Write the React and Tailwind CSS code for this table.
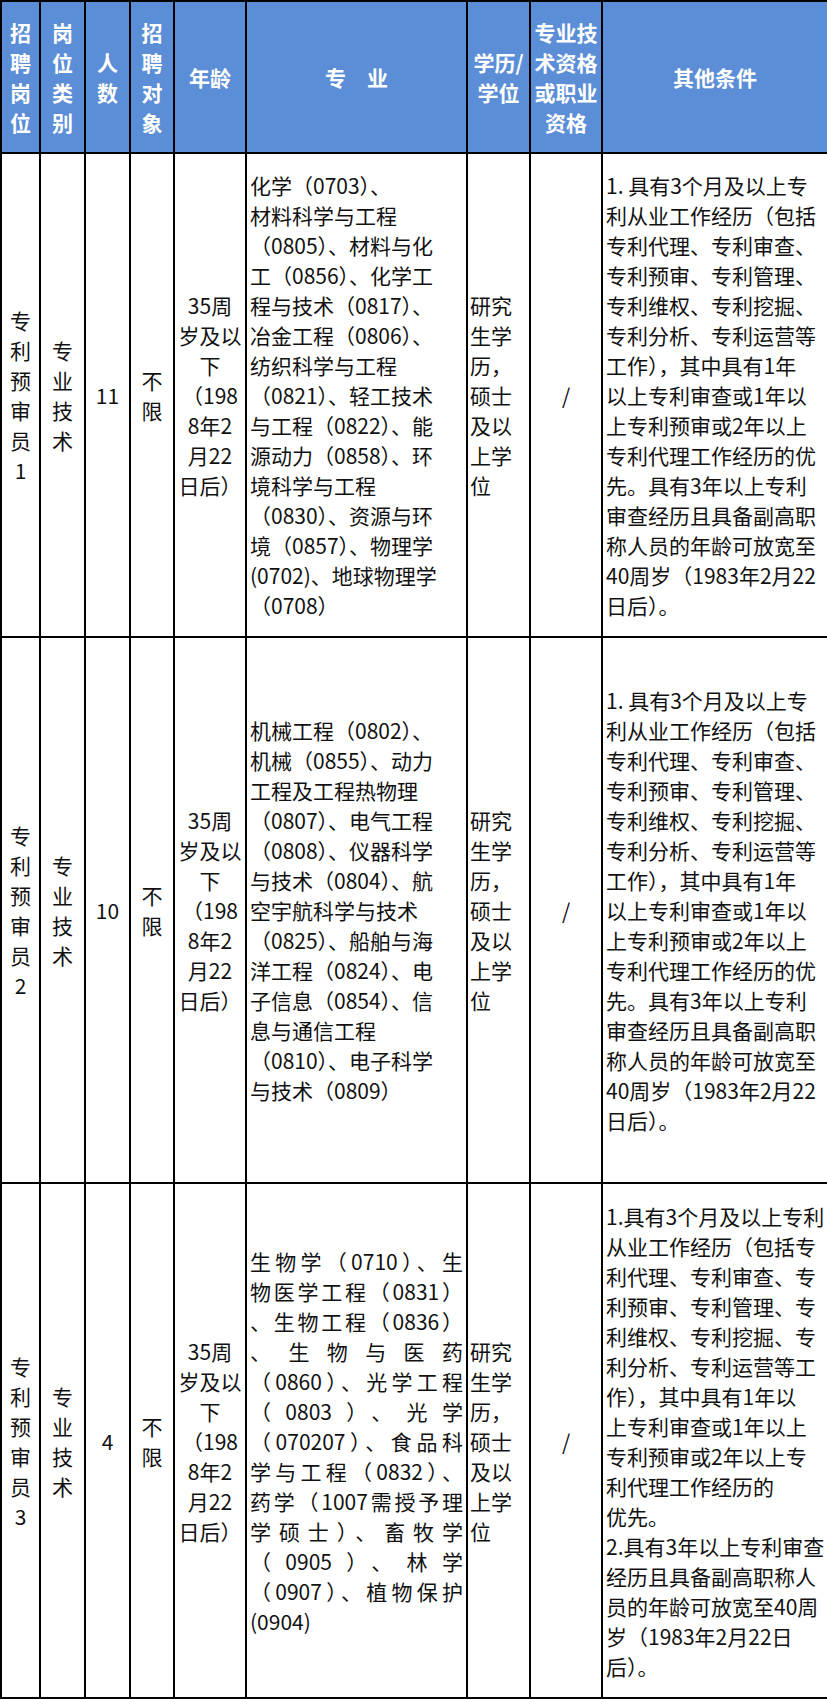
import React from 'react';

const rows = [
    {
        count: '11',
        h: 'h-[484px]',
        justify: false,
        majors: [
            '化学（0703）、',
            '材料科学与工程',
            '（0805）、材料与化',
            '工（0856）、化学工',
            '程与技术（0817）、',
            '冶金工程（0806）、',
            '纺织科学与工程',
            '（0821）、轻工技术',
            '与工程（0822）、能',
            '源动力（0858）、环',
            '境科学与工程',
            '（0830）、资源与环',
            '境（0857）、物理学',
            '(0702)、地球物理学',
            '（0708）',
        ],
        other: [
            '1. 具有3个月及以上专',
            '利从业工作经历（包括',
            '专利代理、专利审查、',
            '专利预审、专利管理、',
            '专利维权、专利挖掘、',
            '专利分析、专利运营等',
            '工作），其中具有1年',
            '以上专利审查或1年以',
            '上专利预审或2年以上',
            '专利代理工作经历的优',
            '先。具有3年以上专利',
            '审查经历且具备副高职',
            '称人员的年龄可放宽至',
            '40周岁（1983年2月22',
            '日后）。',
        ],
        pos: ['专', '利', '预', '审', '员', '1'],
    },
    {
        count: '10',
        h: 'h-[546px]',
        justify: false,
        majors: [
            '机械工程（0802）、',
            '机械（0855）、动力',
            '工程及工程热物理',
            '（0807）、电气工程',
            '（0808）、仪器科学',
            '与技术（0804）、航',
            '空宇航科学与技术',
            '（0825）、船舶与海',
            '洋工程（0824）、电',
            '子信息（0854）、信',
            '息与通信工程',
            '（0810）、电子科学',
            '与技术（0809）',
        ],
        other: [
            '1. 具有3个月及以上专',
            '利从业工作经历（包括',
            '专利代理、专利审查、',
            '专利预审、专利管理、',
            '专利维权、专利挖掘、',
            '专利分析、专利运营等',
            '工作），其中具有1年',
            '以上专利审查或1年以',
            '上专利预审或2年以上',
            '专利代理工作经历的优',
            '先。具有3年以上专利',
            '审查经历且具备副高职',
            '称人员的年龄可放宽至',
            '40周岁（1983年2月22',
            '日后）。',
        ],
        pos: ['专', '利', '预', '审', '员', '2'],
    },
    {
        count: '4',
        h: 'h-[515px]',
        justify: true,
        majors: [
            '生物学（0710）、生',
            '物医学工程（0831）',
            '、生物工程（0836）',
            '、生物与医药',
            '（0860）、光学工程',
            '（0803）、光学',
            '（070207）、食品科',
            '学与工程（0832）、',
            '药学（1007需授予理',
            '学硕士）、畜牧学',
            '（0905）、林学',
            '（0907）、植物保护',
            '(0904)',
        ],
        other: [
            '1.具有3个月及以上专利',
            '从业工作经历（包括专',
            '利代理、专利审查、专',
            '利预审、专利管理、专',
            '利维权、专利挖掘、专',
            '利分析、专利运营等工',
            '作），其中具有1年以',
            '上专利审查或1年以上',
            '专利预审或2年以上专',
            '利代理工作经历的',
            '优先。',
            '2.具有3年以上专利审查',
            '经历且具备副高职称人',
            '员的年龄可放宽至40周',
            '岁（1983年2月22日',
            '后）。',
        ],
        pos: ['专', '利', '预', '审', '员', '3'],
    },
];

const age = ['35周', '岁及以', '下', '（198', '8年2', '月22', '日后）'];

const Lines = ({ lines, justify }) => (
    <>
        {lines.map((l, i) => (
            <div key={i} className={'whitespace-nowrap' + (justify && i < lines.length - 1 ? ' text-justify [text-align-last:justify]' : '')}>{l}</div>
        ))}
    </>
);

const th = 'border-2 border-black bg-[#5b8ed6] text-white font-bold text-center align-middle p-0';
const td = 'border-2 border-black align-middle p-0';

export default function App() {
    return (
        <div className="w-[827px] bg-white text-[21px] leading-[30px] text-[#111]" style={{ fontFamily: '"Noto Sans CJK SC", "Noto Sans", sans-serif' }}>
            <table className="w-[827px] table-fixed border-collapse">
                <colgroup>
                    <col className="w-[39px]" />
                    <col className="w-[45px]" />
                    <col className="w-[45px]" />
                    <col className="w-[44px]" />
                    <col className="w-[72px]" />
                    <col className="w-[221px]" />
                    <col className="w-[63px]" />
                    <col className="w-[72px]" />
                    <col className="w-[226px]" />
                </colgroup>
                <thead>
                    <tr className="h-[152px]">
                        <th className={th}><Lines lines={['招', '聘', '岗', '位']} /></th>
                        <th className={th}><Lines lines={['岗', '位', '类', '别']} /></th>
                        <th className={th}><Lines lines={['人', '数']} /></th>
                        <th className={th}><Lines lines={['招', '聘', '对', '象']} /></th>
                        <th className={th}>年龄</th>
                        <th className={th}>专　业</th>
                        <th className={th}><Lines lines={['学历/', '学位']} /></th>
                        <th className={th}><Lines lines={['专业技', '术资格', '或职业', '资格']} /></th>
                        <th className={th}>其他条件</th>
                    </tr>
                </thead>
                <tbody>
                    {rows.map((r, i) => (
                        <tr key={i} className={r.h}>
                            <td className={td + ' text-center'}><Lines lines={r.pos} /></td>
                            <td className={td + ' text-center'}><Lines lines={['专', '业', '技', '术']} /></td>
                            <td className={td + ' text-center'}>{r.count}</td>
                            <td className={td + ' text-center'}><Lines lines={['不', '限']} /></td>
                            <td className={td + ' text-center'}><Lines lines={age} /></td>
                            <td className={td + ' px-[3px]'}><Lines lines={r.majors} justify={r.justify} /></td>
                            <td className={td + ' pl-[2px]'}><Lines lines={['研究', '生学', '历，', '硕士', '及以', '上学', '位']} /></td>
                            <td className={td + ' text-center'}>/</td>
                            <td className={td + ' px-[3px]'}><Lines lines={r.other} /></td>
                        </tr>
                    ))}
                </tbody>
            </table>
        </div>
    );
}
